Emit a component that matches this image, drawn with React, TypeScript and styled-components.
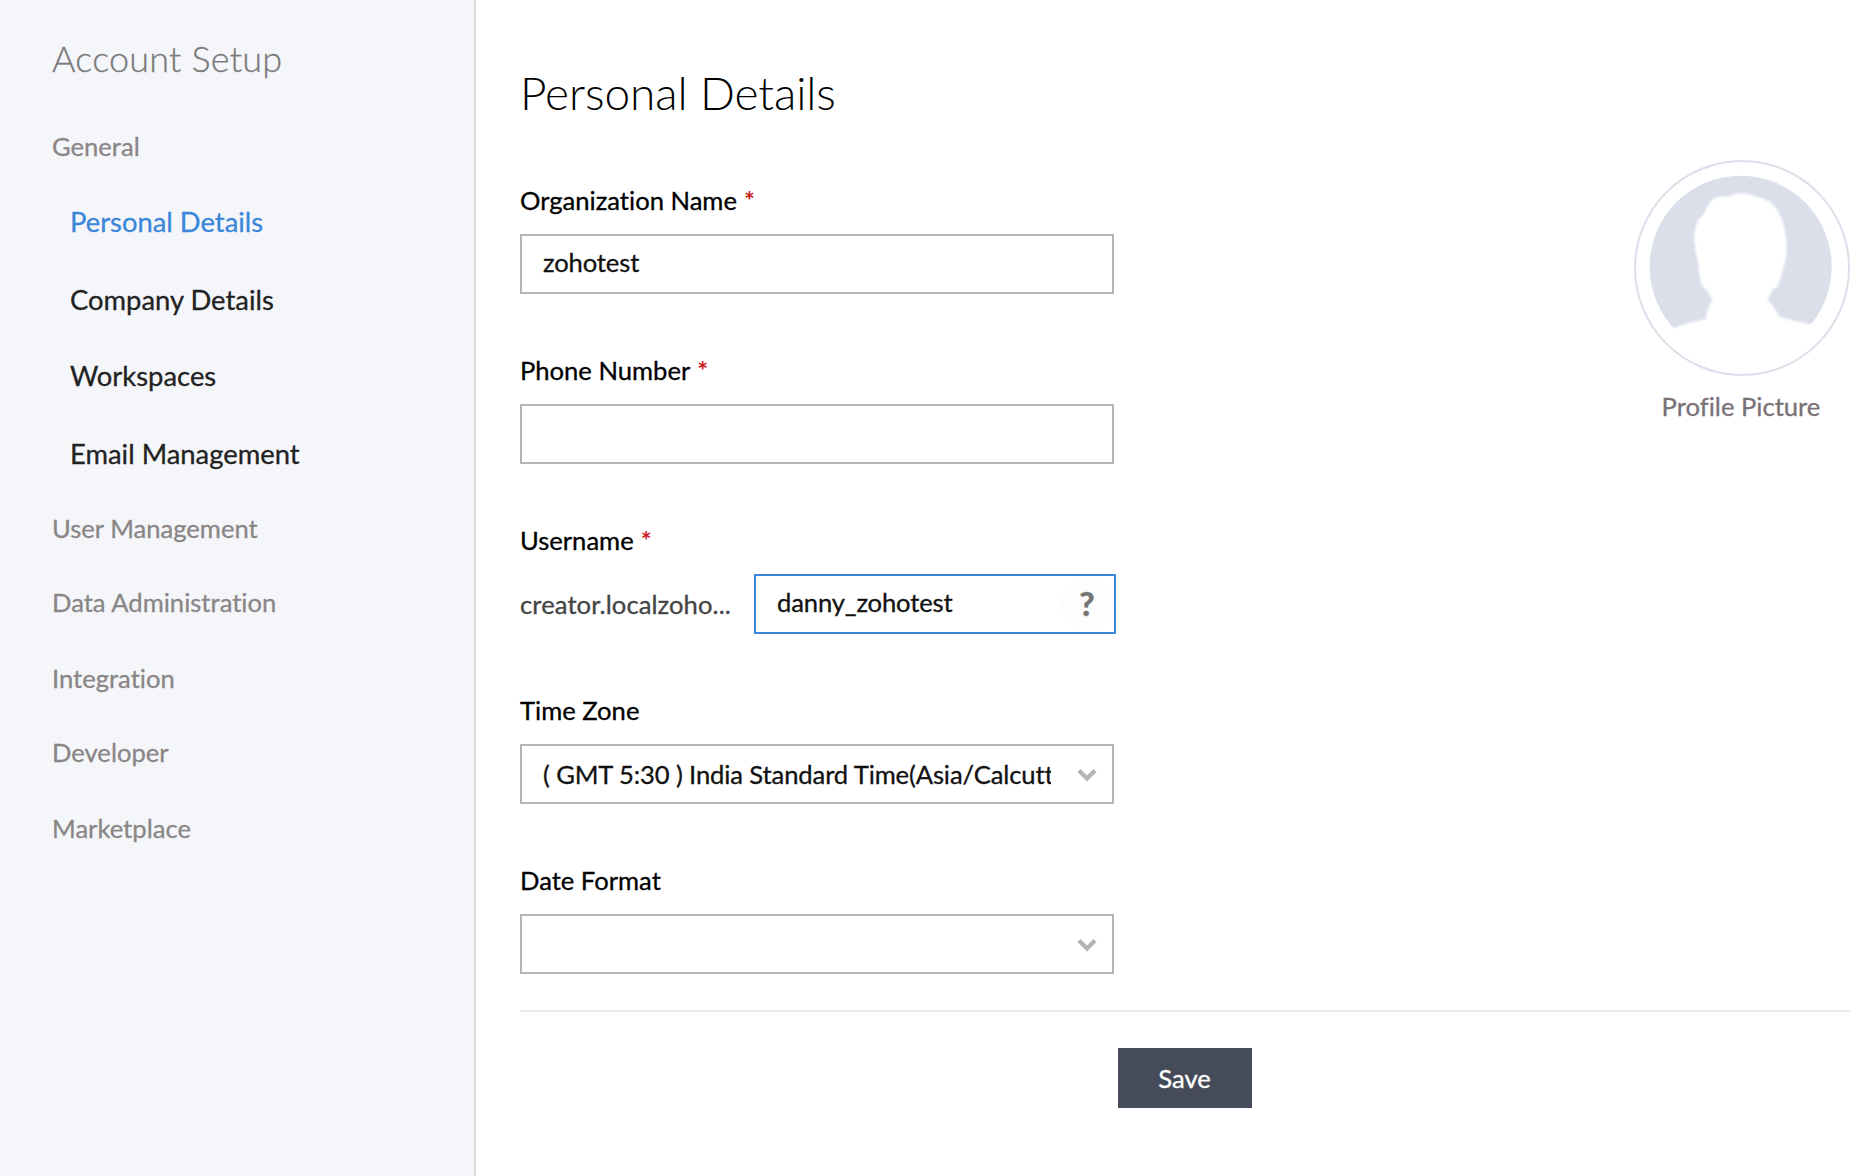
import styled, { createGlobalStyle } from 'styled-components';

const GlobalStyle = createGlobalStyle`
  * {
    box-sizing: border-box;
  }

  body {
    margin: 0;
    background: #fff;
    color: #000;
    font-family: Lato, 'Open Sans', sans-serif;
    font-size: 25.6px;
    font-variant-ligatures: none;
    -webkit-text-stroke: 0.3px;
  }

  ul {
    list-style: none;
    margin: 0;
    padding: 0;
  }
`

const Page = styled.div`
  display: flex;
  width: 100%;
  height: 1176px;
  overflow: hidden;
`

const Sidebar = styled.aside`
  flex: none;
  width: 476px;
  padding: 34px 0 0 52px;
  background: #f5f6fa;
  border-right: 2px solid #d9d9db;
`

const SidebarTitle = styled.h2`
  margin: 0 0 48px;
  font-size: 36px;
  font-weight: 300;
  line-height: 48px;
  letter-spacing: 0.2px;
  color: #7a7a7a;
`

const Section = styled.li`
  height: 76px;
  line-height: 32px;
  color: #8a8686;

  &:nth-child(even) {
    height: 74px;
  }

  &:first-child {
    height: auto;
  }
`

const SubList = styled.ul`
  padding: 43px 0 0 18px;
  font-size: 27.4px;
`

const SubItem = styled.li<{ $active?: boolean }>`
  height: 78px;
  line-height: 34px;
  color: ${props => props.$active ? '#3a87d9' : '#222'};

  &:nth-child(2) {
    height: 76px;
  }

  &:last-child {
    height: 75px;
  }
`

const Main = styled.main`
  flex: 1;
  padding: 63px 14px 0 44px;
`

const Title = styled.h1`
  margin: 0 0 61px;
  font-size: 46px;
  font-weight: 300;
  line-height: 60px;
  letter-spacing: -0.08px;
  -webkit-text-stroke: 0;
`

const Content = styled.div`
  display: flex;
  justify-content: space-between;
  align-items: flex-start;
  height: 828px;
  border-bottom: 2px solid #e9eaea;
`

const Form = styled.div`
  display: flex;
  flex-direction: column;
  gap: 60px;
  width: 594px;
`

const Field = styled.div`
  height: 110px;
`

const Label = styled.div`
  margin-bottom: 18px;
  line-height: 32px;
`

const Required = styled.span`
  margin-left: 7px;
  font-weight: 700;
  color: #cc1616;
  -webkit-text-stroke: 0;
`

const Control = styled.div<{ $active?: boolean }>`
  display: flex;
  align-items: center;
  width: ${props => props.$active ? '362px' : '100%'};
  flex: none;
  height: 60px;
  padding-left: 21px;
  background: #fff;
  border: 2px solid ${props => props.$active ? '#3a87d9' : '#b5b5b5'};
`

const Input = styled.input`
  flex: 1;
  min-width: 0;
  height: 100%;
  padding: 0 0 4px;
  border: none;
  outline: none;
  background: none;
  font: inherit;
  letter-spacing: -0.14px;
  color: #111;
`

const Selected = styled.div`
  width: 508px;
  height: 32px;
  overflow: hidden;
  line-height: 32px;
  letter-spacing: -0.12px;
  white-space: nowrap;
  color: #111;
`

const Arrow = styled.svg`
  flex: none;
  margin: 1px 0 0 26px;
`

const Help = styled.span`
  display: flex;
  align-items: center;
  justify-content: center;
  width: 52px;
  height: 52px;
  padding-bottom: 2px;
  margin-right: 1px;
  border-radius: 50%;
  background: #fdfdfd;
  font-size: 33px;
  font-weight: 900;
  color: #757575;
`

const UserRow = styled.div`
  display: flex;
  align-items: center;
`

const Domain = styled.div`
  flex: none;
  width: 234px;
  padding-bottom: 1px;
  letter-spacing: 0.08px;
  color: #444;
`

const Profile = styled.div`
  display: flex;
  flex-direction: column;
  align-items: center;
  margin-top: -24px;
  color: #7a7177;
`

const ProfileLabel = styled.div`
  padding-right: 2px;
`

const Avatar = styled.svg`
  display: block;
  margin-bottom: 15px;
`

const Footer = styled.div`
  display: flex;
  justify-content: center;
  padding-top: 36px;
`

const SaveButton = styled.button`
  width: 134px;
  height: 60px;
  padding: 0 1px 1px 0;
  border: none;
  background: #454b59;
  color: #fff;
  font: inherit;
`

const subItems = ['Personal Details', 'Company Details', 'Workspaces', 'Email Management']
const sections = ['User Management', 'Data Administration', 'Integration', 'Developer', 'Marketplace']

function Chevron() {
  return (
    <Arrow width="20" height="14" viewBox="0 0 20 14">
      <path d="M2 2.5 L10 10.5 L18 2.5" fill="none" stroke="#b5b5b5" strokeWidth="4.4" />
    </Arrow>
  )
}

function ProfilePicture() {
  return (
    <Profile>
      <Avatar width="216" height="216" viewBox="0 0 648 648">
        <defs>
          <clipPath id="inner"><circle cx="320" cy="320" r="300" /></clipPath>
          <filter id="soft"><feGaussianBlur stdDeviation="3.5" /></filter>
        </defs>
        <circle cx="324" cy="324" r="321" fill="#fff" stroke="#dadfea" strokeWidth="6" />
        <circle cx="320" cy="320" r="273" fill="#dadfea" />
        <g clipPath="url(#inner)">
          <path
            filter="url(#soft)"
            fill="#fff"
            d="M20 550 L112 507 L150 493 L214 478 L222 445 L235 419 L222 396 L204 376 L195 340 L191 300 L185 275 L180 235 L184 205 L192 180 L210 161 L218 143 L232 122 L250 110 L286 109 L302 101 L340 101 L362 109 L386 115 L410 127 L430 150 L445 180 L453 215 L458 255 L457 290 L448 325 L440 355 L431 380 L417 388 L401 419 L418 440 L438 471 L480 482 L540 496 L640 530 L640 648 L20 648 Z"
          />
        </g>
      </Avatar>
      <ProfileLabel>Profile Picture</ProfileLabel>
    </Profile>
  )
}

function App() {
  return (
    <Page>
      <GlobalStyle />
      <Sidebar>
        <SidebarTitle>Account Setup</SidebarTitle>
        <ul>
          <Section>
            General
            <SubList>
              {subItems.map((item, i) => <SubItem key={item} $active={i === 0}>{item}</SubItem>)}
            </SubList>
          </Section>
          {sections.map(item => <Section key={item}>{item}</Section>)}
        </ul>
      </Sidebar>
      <Main>
        <Title>Personal Details</Title>
        <Content>
          <Form>
            <Field>
              <Label>Organization Name<Required>*</Required></Label>
              <Control><Input defaultValue="zohotest" /></Control>
            </Field>
            <Field>
              <Label>Phone Number<Required>*</Required></Label>
              <Control><Input /></Control>
            </Field>
            <Field>
              <Label>Username<Required>*</Required></Label>
              <UserRow>
                <Domain>creator.localzoho...</Domain>
                <Control $active>
                  <Input defaultValue="danny_zohotest" />
                  <Help>?</Help>
                </Control>
              </UserRow>
            </Field>
            <Field>
              <Label>Time Zone</Label>
              <Control>
                <Selected>( GMT 5:30 ) India Standard Time(Asia/Calcutt</Selected>
                <Chevron />
              </Control>
            </Field>
            <Field>
              <Label>Date Format</Label>
              <Control>
                <Selected />
                <Chevron />
              </Control>
            </Field>
          </Form>
          <ProfilePicture />
        </Content>
        <Footer>
          <SaveButton>Save</SaveButton>
        </Footer>
      </Main>
    </Page>
  )
}

export default App
